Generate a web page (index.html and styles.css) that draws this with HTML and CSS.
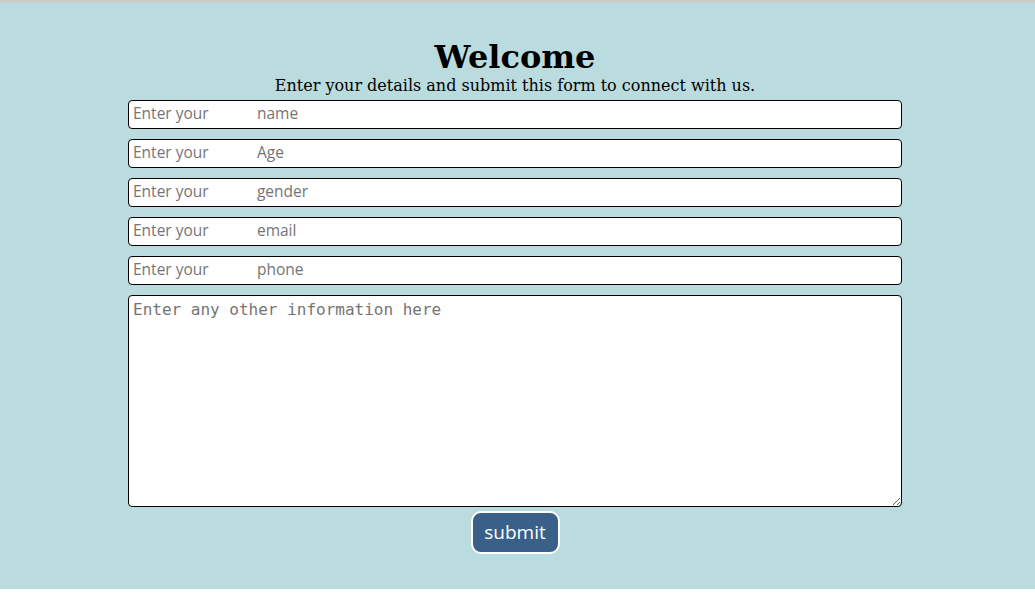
FILE: index.html
```html
<!DOCTYPE html>
<html lang="en">
<head>
<meta charset="utf-8">
<title>Welcome</title>
<link rel="stylesheet" href="styles.css">
</head>
<body>
<div class="page">
  <h1 class="title">Welcome</h1>
  <p class="subtitle">Enter your details and submit this form to connect with us.</p>
  <form class="form">
    <input class="field" type="text" placeholder="Enter your            name">
    <input class="field" type="text" placeholder="Enter your            Age">
    <input class="field" type="text" placeholder="Enter your            gender">
    <input class="field" type="text" placeholder="Enter your            email">
    <input class="field" type="text" placeholder="Enter your            phone">
    <textarea class="info" placeholder="Enter any other information here"></textarea>
    <button class="submit" type="button">submit</button>
  </form>
</div>
</body>
</html>
```
FILE: styles.css
```css
html, body {
  margin: 0;
  padding: 0;
  background: #ffffff;
}

.page {
  border-top: 3px solid #cdcdcd;
  background: #badcdf;
  height: 589px;
  box-sizing: border-box;
  padding: 36px 5px 0 0;
  display: flex;
  flex-direction: column;
  align-items: center;
  font-family: "DejaVu Serif", serif;
  color: #000;
}

.title {
  margin: 0;
  font-size: 32px;
  line-height: 37px;
  font-weight: bold;
}

.subtitle {
  margin: 0;
  font-size: 16px;
  line-height: 20px;
}

.form {
  margin-top: 4px;
  width: 774px;
  display: flex;
  flex-direction: column;
  align-items: center;
  gap: 10px;
}

.field {
  width: 100%;
  height: 29px;
  box-sizing: border-box;
  border: 1px solid #000;
  border-radius: 4px;
  padding: 0 4px 3px;
  font-family: "Open Sans", sans-serif;
  font-size: 15.5px;
  background: #fff;
  outline: none;
}

.field::placeholder {
  color: #757575;
  white-space: pre;
}

.info {
  width: 100%;
  height: 212px;
  box-sizing: border-box;
  border: 1px solid #000;
  border-radius: 4px;
  padding: 4px;
  font-family: "DejaVu Sans Mono", monospace;
  font-size: 16px;
  resize: vertical;
  background: #fff;
  margin-top: 0;
}

.info::placeholder {
  color: #757575;
}

.submit {
  margin-top: -6px;
  width: 89px;
  height: 43px;
  box-sizing: border-box;
  background: #386088;
  color: #fff;
  border: 2px solid #fff;
  border-radius: 10px;
  font-family: "Open Sans", sans-serif;
  font-size: 19px;
  padding: 0 0 2px;
}
```
